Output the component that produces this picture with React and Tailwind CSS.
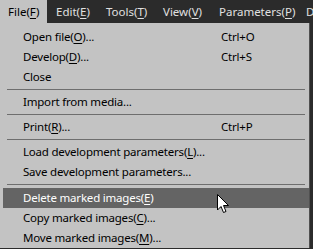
import React from 'react'

const font = { fontFamily: '"Noto Sans", "Open Sans", sans-serif' }

const menus = [
  { label: 'File', key: 'F', active: true, w: 'w-[47px] pl-[8px]' },
  { label: 'Edit', key: 'E', w: 'w-[50px] pl-[9px]' },
  { label: 'Tools', key: 'T', w: 'w-[57px] pl-[9px]' },
  { label: 'View', key: 'V', w: 'w-[56px] pl-[9px]' },
  { label: 'Parameters', key: 'P', w: 'w-[87px] pl-[9px]' },
]

const items = [
  { text: 'Open file', key: 'O', dots: true, shortcut: 'Ctrl+O' },
  { text: 'Develop', key: 'D', dots: true, shortcut: 'Ctrl+S' },
  { text: 'Close' },
  'sep',
  { text: 'Import from media...' },
  'sep',
  { text: 'Print', key: 'R', dots: true, shortcut: 'Ctrl+P' },
  'sep',
  { text: 'Load development parameters', key: 'L', dots: true },
  { text: 'Save development parameters...' },
  'sep-wide',
  { text: 'Delete marked images', key: 'E', hover: true },
  { text: 'Copy marked images', key: 'C', dots: true },
  { text: 'Move marked images', key: 'M', dots: true },
]

function Label({ text, k, dots }) {
  return (
    <span>
      {text}
      {k && (
        <>
          (<span className="underline underline-offset-2">{k}</span>)
        </>
      )}
      {dots && '...'}
    </span>
  )
}

function Cursor() {
  return (
    <svg className="absolute left-[217px] top-[194px]" width="13" height="20" viewBox="0 0 13 20">
      <path d="M0.5 0.5 L0.5 16 L4 12.5 L6.5 18.5 L9 17.5 L6.5 11.5 L11.5 11.5 Z" fill="#fff" stroke="#000" strokeWidth="1" />
    </svg>
  )
}

export default function App() {
  return (
    <div className="relative w-[313px] h-[249px] overflow-hidden bg-[#2b2b2b] text-[11.5px] leading-none" style={font}>
      <div className="flex h-[23px] items-center text-[#e0e0e0] whitespace-nowrap">
        {menus.map(m => (
          <div
            key={m.label}
            className={`h-full shrink-0 flex items-center ${m.w} ${m.active ? 'bg-[#c3c3c3] text-black' : ''}`}
          >
            <Label text={m.label} k={m.key} />
          </div>
        ))}
        <div className="pl-[9px]">D</div>
      </div>

      <div className="w-[310px] bg-[#c3c3c3] border-r border-[#505050] pt-[4px] pl-[3px] text-black whitespace-nowrap tracking-[-0.2px]">
        {items.map((it, i) =>
          it === 'sep' || it === 'sep-wide' ? (
            <div key={i} className={`pt-[2px] pl-[4px] pr-[4px] ${it === 'sep-wide' ? 'pb-[3px]' : 'pb-[2px]'}`}>
              <div className="h-px bg-[#6e6e6e]" />
            </div>
          ) : (
            <div
              key={i}
              className={`h-[20px] flex items-center justify-between pl-[20px] pr-[44px] ${it.hover ? 'bg-[#646464] text-white' : ''}`}
            >
              <Label text={it.text} k={it.key} dots={it.dots} />
              {it.shortcut && <span className="w-[44px]">{it.shortcut}</span>}
            </div>
          )
        )}
      </div>
      <Cursor />
    </div>
  )
}
